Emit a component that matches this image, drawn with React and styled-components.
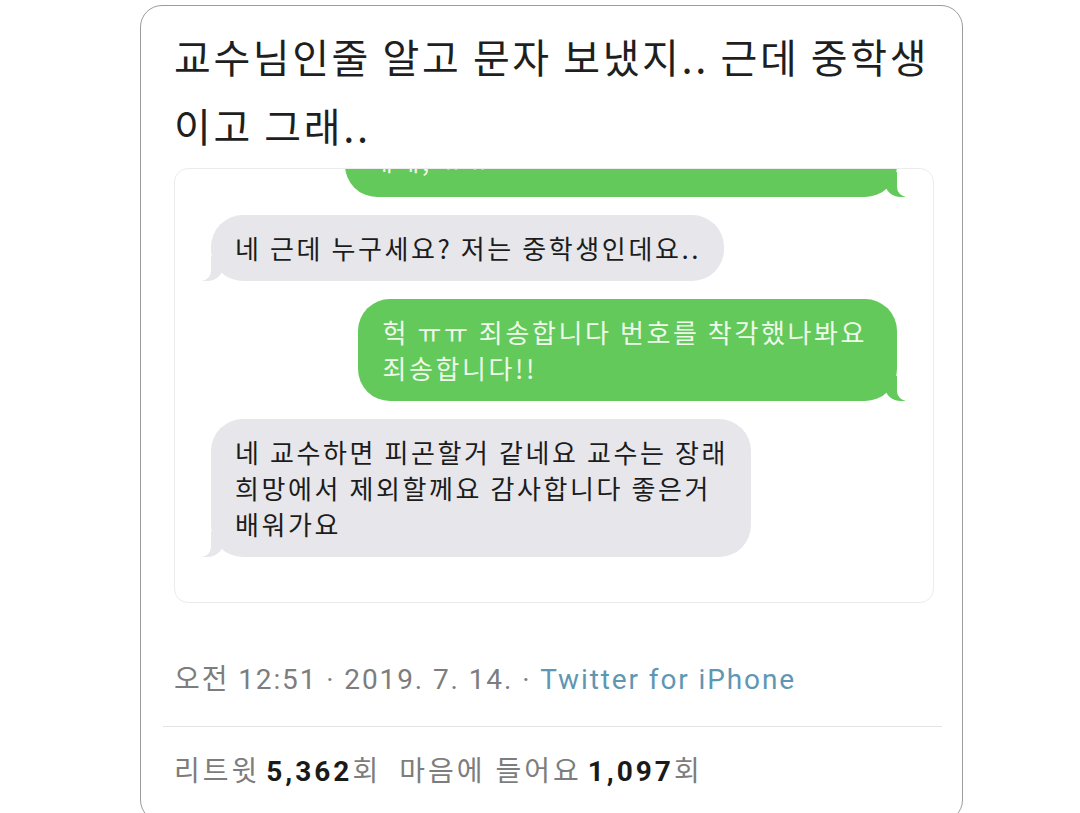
import React from 'react';
import styled, { createGlobalStyle, css } from 'styled-components';

const GlobalStyle = createGlobalStyle`
  html, body {
    margin: 0;
    padding: 0;
    background: #ffffff;
    overflow: hidden;
  }
  body {
    font-family: "Noto Sans CJK KR", "Noto Sans", sans-serif;
  }
`;

const Card = styled.div`
  box-sizing: border-box;
  width: 823px;
  height: 817px;
  margin: 5px 0 0 140px;
  padding: 16px 28px 0 33px;
  border: 1.5px solid #9c9c9c;
  border-radius: 22px;
  background: #fff;
`;

const Title = styled.h1`
  margin: 0;
  font-size: 40px;
  font-weight: 400;
  line-height: 69px;
  color: #1f1f1f;
  letter-spacing: 2.6px;
`;

const ChatPanel = styled.div`
  margin-top: 8px;
  height: 435px;
  box-sizing: border-box;
  border: 1px solid #ececec;
  border-radius: 14px;
  overflow: hidden;
  display: flex;
  flex-direction: column;
  gap: 18px;
  padding: 0 36px 0 36px;
`;

const sentStyle = css`
  align-self: flex-end;
  background: #62c95a;
  color: #eef9ea;
  padding: 15px 30px 15px 24px;

  &::before {
    right: -8px;
    background: #62c95a;
    border-bottom-left-radius: 16px 14px;
  }
  &::after {
    right: -26px;
    border-bottom-left-radius: 10px;
  }
`;

const receivedStyle = css`
  align-self: flex-start;
  background: #e6e6eb;
  color: #1c1c1c;
  padding: 15px 23px 15px 24px;

  &::before {
    left: -8px;
    background: #e6e6eb;
    border-bottom-right-radius: 16px 14px;
  }
  &::after {
    left: -26px;
    border-bottom-right-radius: 10px;
  }
`;

const Bubble = styled.div`
  position: relative;
  box-sizing: border-box;
  flex-shrink: 0;
  border-radius: 32px;
  font-size: 26px;
  line-height: 36px;
  letter-spacing: 2.6px;
  white-space: nowrap;
  ${(p) => (p.$sent ? sentStyle : receivedStyle)}
  ${(p) => p.$width && `width: ${p.$width}px;`}
  ${(p) => p.$clip && `margin-top: ${p.$clip}px; padding-bottom: 19px;`}

  &::before,
  &::after {
    content: '';
    position: absolute;
    bottom: 0;
    height: 25px;
  }
  &::before {
    width: 20px;
  }
  &::after {
    width: 26px;
    background: #fff;
  }
`;

const Meta = styled.div`
  margin-top: 57px;
  font-family: Roboto, "Noto Sans CJK KR", sans-serif;
  font-size: 28px;
  line-height: 40px;
  color: #7d7d7d;
  letter-spacing: 1.9px;
`;

const Source = styled.span`
  color: #5f97b3;
`;

const Divider = styled.hr`
  margin: 26px -8px 0 -11px;
  border: 0;
  border-top: 1.5px solid #e3e3e3;
`;

const Stats = styled.div`
  margin-top: 25px;
  font-family: Roboto, "Noto Sans CJK KR", sans-serif;
  font-size: 28px;
  line-height: 40px;
  color: #7d7d7d;
  letter-spacing: 3px;
  display: flex;
  gap: 18px;
`;

const Count = styled.b`
  color: #1a1a1a;
  font-weight: 700;
  margin: 0 0 0 6px;
`;

const messages = [
  { id: 0, sent: true, width: 552, clip: -78, lines: ['교수님 혹시 이 번호 맞으신가요', '네네, ㅠㅠ'] },
  { id: 1, sent: false, lines: ['네 근데 누구세요? 저는 중학생인데요..'] },
  { id: 2, sent: true, lines: ['헉 ㅠㅠ 죄송합니다 번호를 착각했나봐요', '죄송합니다!!'] },
  {
    id: 3,
    sent: false,
    lines: ['네 교수하면 피곤할거 같네요 교수는 장래', '희망에서 제외할께요 감사합니다 좋은거', '배워가요'],
  },
];

export default function App() {
  return (
    <>
      <GlobalStyle />
      <Card>
        <Title>
          교수님인줄 알고 문자 보냈지.. 근데 중학생
          <br />
          이고 그래..
        </Title>
        <ChatPanel>
          {messages.map((m) => (
            <Bubble key={m.id} $sent={m.sent} $width={m.width} $clip={m.clip}>
              {m.lines.map((line, i) => (
                <div key={i}>{line}</div>
              ))}
            </Bubble>
          ))}
        </ChatPanel>
        <Meta>
          오전 12:51 · 2019. 7. 14. · <Source>Twitter for iPhone</Source>
        </Meta>
        <Divider />
        <Stats>
          <span>
            리트윗<Count>5,362</Count>회
          </span>
          <span>
            마음에 들어요<Count>1,097</Count>회
          </span>
        </Stats>
      </Card>
    </>
  );
}
